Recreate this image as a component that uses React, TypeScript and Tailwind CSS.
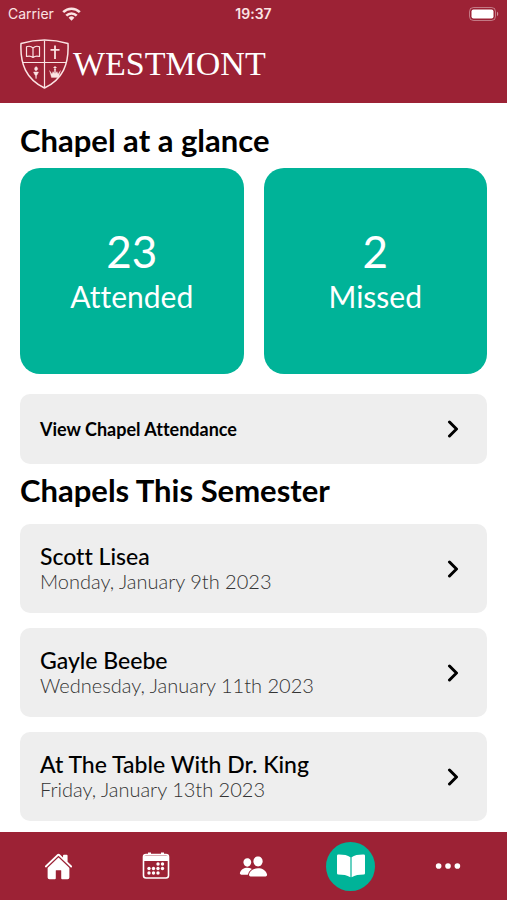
import { ReactNode } from "react";
import { IoEllipsisHorizontal, IoHome, IoPeople } from "react-icons/io5";

const stats = [
  { value: 23, label: "Attended" },
  { value: 2, label: "Missed" },
];

const chapels = [
  { title: "Scott Lisea", date: "Monday, January 9th 2023" },
  { title: "Gayle Beebe", date: "Wednesday, January 11th 2023" },
  { title: "At The Table With Dr. King", date: "Friday, January 13th 2023" },
];

// [x, y] of each day dot on the calendar icon
const calendarDots = [
  [16, 12], [20.5, 12],
  [7, 16.5], [11.5, 16.5], [16, 16.5], [20.5, 16.5],
  [7, 21], [11.5, 21], [16, 21],
];

function WifiIcon() {
  return (
    <svg width="19" height="14" viewBox="0 0 19 14" fill="none" stroke="currentColor" strokeWidth="2.6">
      <path d="M1.2 5.2a11.8 11.8 0 0 1 16.6 0" />
      <path d="M4.3 8.7a7.4 7.4 0 0 1 10.4 0" />
      <path d="M9.5 13.8 6.6 10.8a4.1 4.1 0 0 1 5.8 0z" fill="currentColor" stroke="none" />
    </svg>
  );
}

function BatteryIcon() {
  return (
    <svg width="30" height="14" viewBox="0 0 30 14" fill="none">
      <rect x="0.5" y="0.5" width="26" height="13" rx="4" stroke="white" strokeOpacity="0.4" />
      <rect x="2.5" y="2.5" width="22" height="9" rx="2" fill="white" />
      <path d="M28 4.8c1.6.6 1.6 3.8 0 4.4z" fill="white" fillOpacity="0.5" />
    </svg>
  );
}

function Shield() {
  return (
    <svg width="49" height="50" viewBox="0 0 49 50" fill="none" stroke="#fbe3e3" strokeWidth="1.5" strokeLinejoin="round">
      <path d="M1 4.500Q24.500 -2.500 48 4.500C49 25 43 40 24.500 49C6 40 0 25 1 4.500z" />
      <path d="M24.500 1.500V48.500M2 23.500H47" strokeWidth="1.200" />
      {/* book */}
      <path d="M13 9C11 7 9 6.800 6.500 7.800V17.500C9 16.700 11 16.800 13 18.500C15 16.800 17 16.700 19.500 17.500V7.800C17 6.800 15 7 13 9zM13 9V18.500" strokeWidth="1.200" />
      {/* cross */}
      <path d="M35 6.500V20M30.500 10.800H39.500" strokeWidth="1.800" />
      {/* torch */}
      <path d="M16 27.500C18.500 29 18 31 16 32C14 31 14 29 16 27.500zM13.500 33H18.500L17 36H15zM15.500 36L15.800 39.500H16.300L16.500 36z" fill="#fbe3e3" strokeWidth="0.400" />
      {/* crown */}
      <path d="M29.500 31.500L32 35L33 32.500L34.400 34.500V30H35.600V34.500L37 32.500L38 35L40.500 31.500L38.500 38.500H31.500z" fill="#fbe3e3" strokeWidth="0.300" />
      <path d="M35 27V31M33.500 28.500H36.500" strokeWidth="1" />
    </svg>
  );
}

function CalendarIcon() {
  return (
    <svg width="28" height="28" viewBox="0 0 28 28" fill="currentColor">
      <rect x="1.5" y="2.5" width="25" height="23.500" rx="2.500" fill="none" stroke="currentColor" strokeWidth="1.600" />
      <path d="M3 3.500H25Q26 3.500 26 4.500V9H2V4.500Q2 3.500 3 3.500z" />
      <path d="M6 1.500H9M19 1.500H22" stroke="currentColor" strokeWidth="2" />
      {calendarDots.map(([x, y]) => (
        <circle key={`${x}-${y}`} cx={x} cy={y} r="1.700" />
      ))}
    </svg>
  );
}

function OpenBook() {
  return (
    <svg width="28" height="24" viewBox="0 0 28 24" fill="white">
      <path d="M13.400 3.200C10.500 1 6 .4 1.200.5Q0 .6 0 1.800V19.200Q0 20.400 1.200 20.400C6 20.400 10 21 13.400 23.300z" />
      <path d="M14.600 3.200C17.500 1 22 .4 26.800.5Q28 .6 28 1.800V19.200Q28 20.400 26.800 20.400C22 20.400 18 21 14.600 23.300z" />
    </svg>
  );
}

function Chevron() {
  return (
    <svg className="shrink-0" width="12" height="18" viewBox="0 0 12 18" fill="none" stroke="black" strokeWidth="3" strokeLinecap="round" strokeLinejoin="round">
      <path d="M2.500 2 9.500 9 2.500 16" />
    </svg>
  );
}

function NavItem({ label, active, children }: { label: string; active?: boolean; children: ReactNode }) {
  return (
    <a href="#" aria-label={label} aria-current={active ? "page" : undefined} className="flex flex-1 justify-center">
      <span className={`flex size-[49px] items-center justify-center rounded-full ${active ? "bg-[#00b398]" : ""}`}>{children}</span>
    </a>
  );
}

export default function App() {
  return (
    <div className="flex min-h-screen flex-col bg-white font-['Lato',sans-serif] text-black [font-variant-ligatures:none]">
      <header className="bg-[#9c2235] pb-[14px] text-white">
        <div className="grid grid-cols-3 items-center px-2 pt-1 font-['Inter',sans-serif] text-sm leading-5">
          <div className="flex items-center gap-2 text-[#fbe3e3]">
            Carrier
            <WifiIcon />
          </div>
          <div className="text-center font-semibold text-[#fbe3e3]">19:37</div>
          <div className="flex justify-end">
            <BatteryIcon />
          </div>
        </div>
        <div className="flex items-center gap-1 px-5 pt-[15px]">
          <Shield />
          <span className="font-['Liberation_Serif',serif] text-[34px] leading-[50px]">WESTMONT</span>
        </div>
      </header>

      <main className="flex-1 px-5 pt-[19px] pb-[11px]">
        <h1 className="text-[31px] leading-9 font-bold">Chapel at a glance</h1>
        <div className="mt-[10px] grid grid-cols-2 gap-5">
          {stats.map((s) => (
            <div key={s.label} className="flex h-[206px] flex-col items-center justify-center rounded-[20px] bg-[#00b398] text-white">
              <span className="text-[44px] leading-[50px]">{s.value}</span>
              <span className="text-[30px] leading-10">{s.label}</span>
            </div>
          ))}
        </div>

        <button className="mt-5 flex h-[70px] w-full items-center justify-between rounded-[10px] bg-[#eeeeee] pr-7 pl-5 text-left">
          <span className="text-[18px] leading-6 font-bold">View Chapel Attendance</span>
          <Chevron />
        </button>

        <h2 className="mt-2 text-[31px] leading-9 font-bold">Chapels This Semester</h2>
        <div className="mt-4 flex flex-col gap-[15px]">
          {chapels.map((c) => (
            <button key={c.title} className="flex h-[89px] w-full items-center justify-between rounded-[10px] bg-[#eeeeee] pr-7 pl-5 text-left">
              <span className="flex flex-col pb-[2px]">
                <span className="text-[23px] leading-[26px] font-medium">{c.title}</span>
                <span className="text-[20px] leading-6 font-light text-[#333333]">{c.date}</span>
              </span>
              <Chevron />
            </button>
          ))}
        </div>
      </main>

      <nav className="sticky bottom-0 flex h-[68px] items-center bg-[#9c2235] px-[10px] text-white">
        <NavItem label="Home">
          <IoHome size={29} />
        </NavItem>
        <NavItem label="Calendar">
          <CalendarIcon />
        </NavItem>
        <NavItem label="People">
          <IoPeople size={29} />
        </NavItem>
        <NavItem label="Chapel" active>
          <OpenBook />
        </NavItem>
        <NavItem label="More">
          <IoEllipsisHorizontal size={30} />
        </NavItem>
      </nav>
    </div>
  );
}
